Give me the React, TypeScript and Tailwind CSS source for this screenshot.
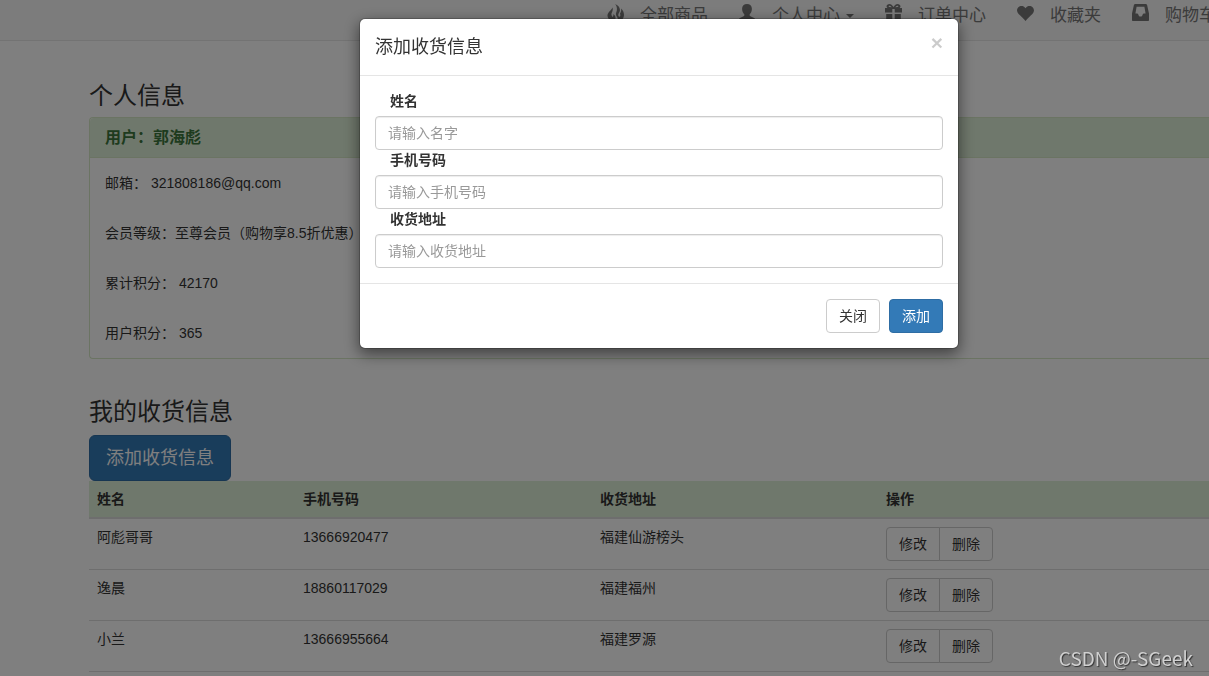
import { useState } from 'react';
import type { ReactNode } from 'react';

const navItems = [
  { key: 'all', label: '全部商品', icon: 'fire' },
  { key: 'me', label: '个人中心', icon: 'user', dropdown: true },
  { key: 'orders', label: '订单中心', icon: 'gift' },
  { key: 'favorites', label: '收藏夹', icon: 'heart' },
  { key: 'cart', label: '购物车', icon: 'inbox' }
];

const profileRows = [
  '邮箱： 321808186@qq.com',
  '会员等级：至尊会员（购物享8.5折优惠）',
  '累计积分： 42170',
  '用户积分： 365'
];

const addresses = [
  { name: '阿彪哥哥', phone: '13666920477', address: '福建仙游榜头' },
  { name: '逸晨', phone: '18860117029', address: '福建福州' },
  { name: '小兰', phone: '13666955664', address: '福建罗源' }
];

const fields = [
  { id: 'name', label: '姓名', placeholder: '请输入名字' },
  { id: 'phone', label: '手机号码', placeholder: '请输入手机号码' },
  { id: 'address', label: '收货地址', placeholder: '请输入收货地址' }
];

const iconPaths: Record<string, ReactNode> = {
  fire: (
    <path d="M8.200 0c3.400 1.600 5 3.900 4.700 6.500-.2 1.700-1.500 2.800-1.600 4.300-.1 1.200.4 2 1.100 2 1.200-.1 1.200-1.900.5-3.300.8-1.100 1.500-2.500 1.200-5 2.400 2.300 3.200 5 2.800 7.500-.4 2.500-2 4.200-4.300 5H10c1-.8 1.200-2.200.2-3.700-1.200-1.800-1.700-3.300-.9-5.100C10.300 5.800 10.300 2.600 8.200 0zM5.500 3.400c.6 2 .2 3.500-.6 5-.8 1.600-.6 3.100.5 4.500.9-.5 1.200-1.500.9-2.900 1.700 1.300 2.400 2.800 2.200 4.400-.1 1.100-.7 2-1.600 2.600H4.700C2.300 16.200.6 14.300.5 11.700.4 8.300 3.800 6.700 5.500 3.400z" />
  ),
  user: (
    <path d="M8 0c3 0 4.900 1.900 4.900 4.800 0 2.400-.9 4.400-2.300 5.700v.7c0 .5.300.8.800 1l3.700 1.700c.6.300.9.700.9 1.300V17H0v-1.800c0-.6.300-1 .9-1.300l3.700-1.700c.5-.2.8-.5.8-1v-.7C4 9.200 3.100 7.200 3.100 4.800 3.100 1.900 5 0 8 0z" />
  ),
  gift: (
    <path
      fillRule="evenodd"
      d="M4.500 0c1.500 0 2.700 1 4 3 1.300-2 2.500-3 4-3C14.200 0 15.500 1 15.500 2.300c0 .8-.4 1.300-1 1.700H17v4.500H9.700V5H7.300v3.500H0V4h2.500c-.6-.4-1-.9-1-1.700C1.500 1 2.800 0 4.500 0zM4.200 1.700c-.7.300-.8 1.100.2 1.300l2.300.3C6 2.200 5.200 1.400 4.200 1.700zm8.600 0c-1-.3-1.800.5-2.500 1.600l2.300-.3c1-.2.900-1 .2-1.300zM1.200 10h6.100v7H2.200c-.6 0-1-.4-1-1zm8.500 0h6.100v6c0 .6-.4 1-1 1H9.700z"
    />
  ),
  heart: (
    <path d="M8.500 4.200C9.600 2.600 11 2 12.500 2c2.400 0 4.500 2.100 4.500 4.600 0 2.600-2.700 4.500-5 6.700-1.200 1.100-2.400 2.300-3.500 3.700-1.100-1.400-2.300-2.600-3.500-3.700C2.700 11.100 0 9.200 0 6.600 0 4.100 2.100 2 4.500 2 6 2 7.400 2.600 8.500 4.200z" />
  ),
  inbox: (
    <path
      fillRule="evenodd"
      d="M3.300 0h10.400c.7 0 1.200.4 1.400 1L17 9.600V16c0 .6-.4 1-1 1H1c-.6 0-1-.4-1-1V9.600L1.900 1c.2-.6.700-1 1.400-1zM4.600 2.700L3.400 9.500h1.700c.6 0 .9.300 1.100.8l.6 1.500c.2.500.5.700 1 .7h1.400c.5 0 .8-.2 1-.7l.6-1.500c.2-.5.5-.8 1.100-.8h1.700l-1.200-6.800z"
    />
  )
};

function NavIcon({ name }: { name: string }) {
  return (
    <svg viewBox="0 0 17 17" className="w-[17px] h-[17px] flex-shrink-0" fill="currentColor" aria-hidden="true">
      {iconPaths[name]}
    </svg>
  );
}

function Navbar() {
  return (
    <nav className="h-[41px] bg-[#f8f8f8] border-b border-[#e7e7e7] pt-1">
      <ul className="flex gap-[31px] pl-[607px] whitespace-nowrap">
        {navItems.map(item => (
          <li key={item.key}>
            <a href="#" className="flex items-start text-[17px] leading-6 text-[#777]">
              <NavIcon name={item.icon} />
              <span className="ml-4">{item.label}</span>
              {item.dropdown && (
                <span className="self-center ml-1.5 border-x-4 border-t-4 border-x-transparent border-t-[#777]" />
              )}
            </a>
          </li>
        ))}
      </ul>
    </nav>
  );
}

function AddressModal({ onClose }: { onClose: () => void }) {
  return (
    <div className="fixed inset-0 z-10 bg-black/50 flex items-start justify-center pt-[18px] pl-[109px]">
      <div
        role="dialog"
        aria-labelledby="modal-title"
        className="w-[600px] bg-white bg-clip-padding border border-black/20 rounded-md shadow-[0_5px_15px_rgba(0,0,0,0.5)]"
      >
        <div className="flex items-start justify-between p-[15px] border-b border-[#e5e5e5]">
          <h4 id="modal-title" className="text-lg leading-[26px]">添加收货信息</h4>
          <button
            type="button"
            aria-label="关闭窗口"
            onClick={onClose}
            className="-mt-0.5 text-[21px] leading-[21px] font-bold text-black opacity-20 cursor-pointer"
          >
            ×
          </button>
        </div>

        <div className="p-[15px]">
          {fields.map(field => (
            <div key={field.id}>
              <label htmlFor={field.id} className="block mb-[5px] pl-[15px] font-bold">
                {field.label}
              </label>
              <input
                id={field.id}
                type="text"
                placeholder={field.placeholder}
                className="block w-full h-[34px] px-3 bg-white border border-[#ccc] rounded text-[#555] placeholder:text-[#999] shadow-[inset_0_1px_1px_rgba(0,0,0,0.075)] focus:outline-none focus:border-[#66afe9]"
              />
            </div>
          ))}
        </div>

        <div className="flex justify-end gap-[9px] p-[15px] border-t border-[#e5e5e5]">
          <button
            type="button"
            onClick={onClose}
            className="h-[34px] px-3 bg-white border border-[#ccc] rounded cursor-pointer"
          >
            关闭
          </button>
          <button
            type="button"
            className="h-[34px] px-3 bg-[#337ab7] border border-[#2e6da4] rounded text-white cursor-pointer"
          >
            添加
          </button>
        </div>
      </div>
    </div>
  );
}

export default function App() {
  const [showModal, setShowModal] = useState(true);

  return (
    <div className="min-h-screen overflow-hidden bg-white font-['Liberation_Sans','Noto_Sans_CJK_SC',sans-serif] text-sm leading-5 text-[#333]">
      <Navbar />

      <main className="pt-[42px] pl-[89px]">
        <h3 className="mb-2 text-2xl leading-[26px]">个人信息</h3>
        <section className="border border-r-0 border-[#d6e9c6] rounded-l">
          <div className="px-[15px] py-2.5 bg-[#dff0d8] border-b border-[#d6e9c6] rounded-tl">
            <h3 className="text-base leading-[19px] font-bold text-[#3c763d]">用户：郭海彪</h3>
          </div>
          <div className="px-[15px]">
            {profileRows.map(row => (
              <p key={row} className="py-[15px]">{row}</p>
            ))}
          </div>
        </section>

        <h3 className="mt-10 mb-2.5 text-2xl leading-[26px]">我的收货信息</h3>
        <button
          type="button"
          onClick={() => setShowModal(true)}
          className="block h-[46px] px-4 bg-[#337ab7] border border-[#2e6da4] rounded-md text-lg text-white cursor-pointer"
        >
          添加收货信息
        </button>

        <table className="w-full table-fixed text-left">
          <thead>
            <tr className="bg-[#dff0d8] border-b-2 border-[#ddd]">
              <th className="w-[206px] p-2">姓名</th>
              <th className="w-[297px] p-2">手机号码</th>
              <th className="w-[286px] p-2">收货地址</th>
              <th className="p-2">操作</th>
            </tr>
          </thead>
          <tbody>
            {addresses.map(item => (
              <tr key={item.phone} className="border-b border-[#ddd] align-top">
                <td className="p-2">{item.name}</td>
                <td className="p-2">{item.phone}</td>
                <td className="p-2">{item.address}</td>
                <td className="p-2">
                  <div className="flex">
                    <button type="button" className="h-[34px] px-3 bg-white border border-[#ccc] rounded-l cursor-pointer">
                      修改
                    </button>
                    <button type="button" className="h-[34px] px-3 -ml-px bg-white border border-[#ccc] rounded-r cursor-pointer">
                      删除
                    </button>
                  </div>
                </td>
              </tr>
            ))}
          </tbody>
        </table>
      </main>

      {showModal && <AddressModal onClose={() => setShowModal(false)} />}

      <span className="fixed right-4 bottom-1 z-20 font-['Noto_Sans_CJK_SC',sans-serif] text-[19px] leading-7 text-[#d0d0d0] [text-shadow:1px_1px_1px_#333]">
        CSDN @-SGeek
      </span>
    </div>
  );
}
